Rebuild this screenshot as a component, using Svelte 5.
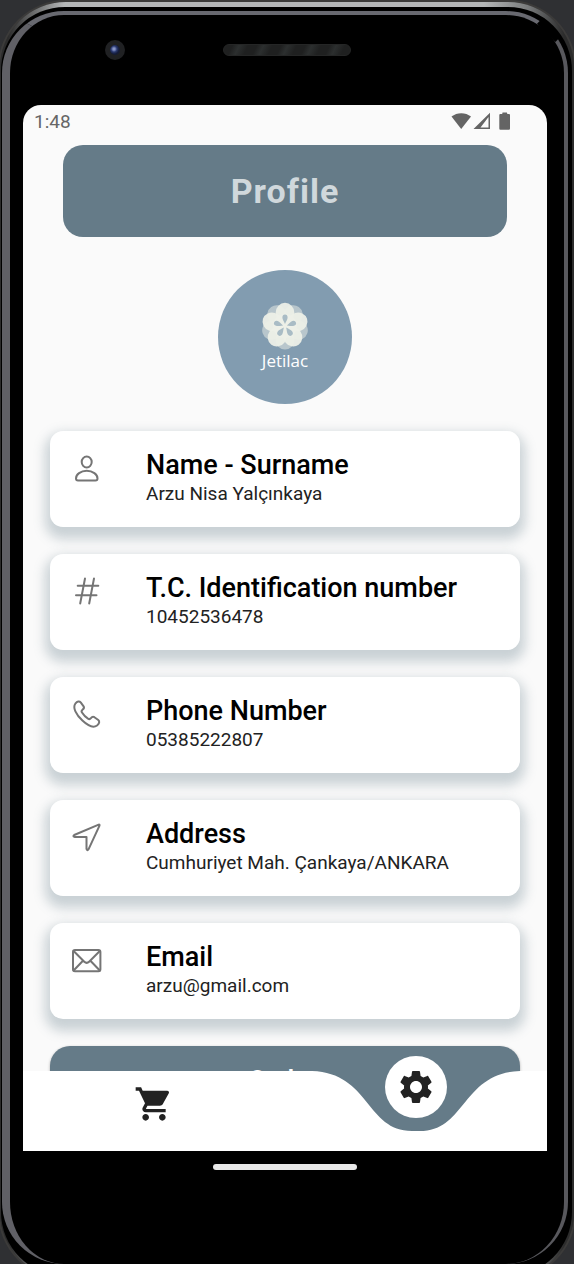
<script>
  const fields = [
    { icon: 'person', label: 'Name - Surname', value: 'Arzu Nisa Yalçınkaya' },
    { icon: 'number', label: 'T.C. Identification number', value: '10452536478' },
    { icon: 'phone', label: 'Phone Number', value: '05385222807' },
    { icon: 'location', label: 'Address', value: 'Cumhuriyet Mah. Çankaya/ANKARA' },
    { icon: 'mail', label: 'Email', value: 'arzu@gmail.com' }
  ];
  const petals = [0, 72, 144, 216, 288];
</script>

<div class="stage">
  <div class="phone">
    <div class="rim" aria-hidden="true"></div>
    <div class="bevel" aria-hidden="true"></div>
    <div class="glint" aria-hidden="true"></div>

    <div class="top-bezel" aria-hidden="true">
      <span class="camera"></span>
      <span class="speaker"></span>
    </div>

    <div class="screen">
      <div class="status">
        <span>1:48</span>
        <svg width="60" height="18" viewBox="0 0 60 18" aria-hidden="true">
          <path d="M.5 4.500C6 0 14.500 0 20 4.500L10.200 17z" fill="#646464" />
          <path d="M22.500 17L39 .8V17z M29.500 15.400H37.500V5z" fill="#646464" fill-rule="evenodd" />
          <path d="M51.300 2V1Q51.300.6 51.700.6H55.800Q56.200.6 56.200 1V2H58Q59 2 59 3V16.500Q59 17.700 57.900 17.700H49.400Q48.300 17.700 48.300 16.500V3Q48.300 2 49.300 2z" fill="#646464" />
        </svg>
      </div>

      <main>
        <h1>Profile</h1>

        <div class="logo">
          <svg width="50" height="50" viewBox="-25 -25 50 50" aria-hidden="true">
            {#each petals as a}
              <circle cx="0" cy="14" r="9.500" fill="#edf0e8" opacity=".5" transform="rotate({a})" />
            {/each}
            {#each petals as a}
              <ellipse cx="0" cy="-13.500" rx="9.300" ry="9.700" fill="#edf0e8" opacity=".94" transform="rotate({a})" />
            {/each}
            <circle r="12" fill="#edf0e8" />
            {#each petals as a}
              <path d="M0-2C-1.200-5-2.600-6.500-2.600-8.500A2.600 3 0 0 1 2.600-8.500C2.600-6.500 1.200-5 0-2z" fill="#a9bcc5" transform="rotate({a})" />
            {/each}
          </svg>
          <span>Jetilac</span>
        </div>

        <div class="cards">
          {#each fields as f}
            <section class="card">
              <svg class="icon" width="32" height="32" viewBox="0 0 32 32" aria-hidden="true">
                {#if f.icon === 'person'}
                  <ellipse cx="15.700" cy="9" rx="5" ry="5.400" />
                  <path d="M15.700 17.800C9.600 17.800 5 21.600 5 25.400Q5 27.400 7 27.400H24.500Q26.500 27.400 26.500 25.400C26.500 21.600 21.800 17.800 15.700 17.800z" />
                {:else if f.icon === 'number'}
                  <path d="M14 2.500L9.200 27.500M23 2.500L18.200 27.500M6.700 9.700H27.300M5 19.300H25.500" />
                {:else if f.icon === 'phone'}
                  <path d="M4.300 4.700C6.300 2.300 8.300 1.900 9.700 3.400L12.600 7.300C13.500 8.700 13 9.600 11.500 10.700C10.100 11.700 10.200 12.300 11 13.600C12.500 16 14.700 18.200 17 19.700C18.300 20.500 18.900 20.500 19.900 19.200C21 17.700 22 17.300 23.400 18.200L27.300 21C28.800 22.300 28.500 24.400 26 26.500C23 28.600 17.500 27.300 11.400 21.600C5 15.700 1.500 8.700 4.300 4.700z" />
                {:else if f.icon === 'location'}
                  <path d="M27.700 2.600L3.200 13Q1.500 14.100 3.500 14.900H15.500V27Q16.300 29.200 17.500 27.300L28.500 3.600Q28.700 2.300 27.700 2.600z" />
                {:else}
                  <rect x="2" y="5" width="27.400" height="21.200" rx="2" />
                  <path d="M2.600 6L13.300 16.700Q15.700 19 18.100 16.700L28.800 6M2.600 25.500L11.500 16.300M28.800 25.500L19.900 16.300" />
                {/if}
              </svg>
              <div class="text">
                <h2>{f.label}</h2>
                <p>{f.value}</p>
              </div>
            </section>
          {/each}
        </div>

        <button class="orders">Order</button>
      </main>

      <nav>
        <button class="tab" aria-label="Cart">
          <svg width="40" height="40" viewBox="0 0 24 24" aria-hidden="true">
            <path fill="#222" d="M7 18c-1.100 0-1.990.9-1.990 2S5.900 22 7 22s2-.9 2-2-.9-2-2-2zM1 2v2h2l3.600 7.590-1.350 2.450c-.16.28-.25.61-.25.960 0 1.100.9 2 2 2h12v-2H7.420c-.14 0-.25-.11-.25-.25l.03-.12.9-1.630h7.450c.75 0 1.410-.41 1.750-1.030l3.580-6.490c.08-.14.12-.31.12-.480 0-.55-.45-1-1-1H5.210l-.94-2H1zm16 16c-1.100 0-1.990.9-1.990 2s.89 2 1.990 2 2-.9 2-2-.9-2-2-2z" />
          </svg>
        </button>
        <div class="active">
          <span class="fill"></span>
          <svg class="notch" width="208" height="80" viewBox="0 0 208 80" aria-hidden="true">
            <path fill="#fff" d="M0 0C58 2 54 60 100 60H108C154 60 150 2 208 0V80H0z" />
          </svg>
          <span class="fill"></span>
          <button class="bubble" aria-label="Settings">
            <svg width="40" height="40" viewBox="0 0 24 24" aria-hidden="true">
              <path fill="#222" d="M19.140 12.940c.04-.3.06-.61.06-.940 0-.32-.02-.64-.07-.940l2.030-1.580c.18-.14.23-.41.12-.610l-1.920-3.320c-.12-.22-.37-.29-.59-.220l-2.390.960c-.5-.38-1.030-.7-1.620-.940l-.36-2.540c-.04-.24-.24-.41-.480-.410h-3.840c-.24 0-.43.17-.47.410l-.36 2.540c-.59.24-1.130.57-1.620.940l-2.390-.960c-.22-.08-.47 0-.59.220L2.740 8.870c-.12.21-.08.47.12.610l2.030 1.580c-.05.3-.09.63-.09.940s.02.64.07.940l-2.030 1.580c-.18.14-.23.41-.12.610l1.920 3.320c.12.22.37.29.59.220l2.390-.960c.5.38 1.030.7 1.620.940l.36 2.540c.05.24.24.41.480.410h3.840c.24 0 .44-.17.47-.410l.36-2.540c.59-.24 1.130-.56 1.620-.940l2.390.960c.22.08.47 0 .59-.220l1.920-3.320c.12-.22.07-.47-.12-.610l-2.010-1.580zM12 15.600c-1.980 0-3.600-1.620-3.600-3.600s1.620-3.600 3.600-3.600 3.600 1.620 3.600 3.600-1.620 3.600-3.600 3.600z" />
            </svg>
          </button>
        </div>
      </nav>
    </div>

    <div class="bottom-bezel"><span class="home"></span></div>
  </div>
</div>

<style>
  :global(body) {
    background: #2f3033;
  }

  .stage {
    overflow: hidden;
    font-family: Roboto, "Noto Sans", sans-serif;
    color: #222;
  }

  .phone {
    position: relative;
    box-sizing: border-box;
    min-height: 100vh;
    padding: 0 27px 0 23px;
  }

  .rim,
  .rim::after,
  .bevel,
  .glint {
    position: absolute;
    box-sizing: border-box;
  }

  .rim {
    inset: 2px 0 -14px 0;
    border-radius: 66px;
    background: linear-gradient(90deg, #2c2c2c 8px, #b4b6b7 64px calc(100% - 90px), #77797a calc(100% - 45px), #2c2c2c calc(100% - 10px));
    box-shadow: 0 0 0 2px #3c3b3a;
  }

  .rim::after {
    content: "";
    inset: 5px 2px 2px 1px;
    border-radius: 64px;
    background: #000;
  }

  .bevel {
    inset: 11px 6px 0 2px;
    border-style: solid;
    border-width: 4px 4px 0 8px;
    border-color: #686970 #58585d transparent #606066;
    border-radius: 62px;
  }

  .glint {
    top: 17px;
    right: 21px;
    width: 8px;
    height: 26px;
    background: #000;
    transform: rotate(-45deg);
  }

  .top-bezel {
    position: relative;
    display: grid;
    grid-template-columns: 1fr 128px 1fr;
    align-items: center;
    height: 105px;
    box-sizing: border-box;
    padding: 0 0 5px 3px;
  }

  .camera {
    width: 10px;
    height: 10px;
    margin-left: 79px;
    border: 5px solid #202123;
    border-radius: 50%;
    background: radial-gradient(circle at 40% 40%, #8795c8 0 1px, #29386f 3px, #151c38 5px);
  }

  .speaker {
    grid-column: 2;
    height: 12px;
    border: 1px solid #252626;
    border-radius: 7px;
    box-sizing: border-box;
    background: repeating-linear-gradient(115deg, #1f2020 0 8px, #2c2f2f 14px, #1f2020 22px);
  }

  .screen {
    position: relative;
    overflow: hidden;
    background: #fafafa;
    border-radius: 18px 18px 0 0;
  }

  .status {
    display: flex;
    justify-content: space-between;
    align-items: center;
    height: 32px;
    padding: 0 36px 0 11px;
    font-size: 19px;
    color: #666;
  }

  main {
    display: flex;
    flex-direction: column;
    align-items: center;
    padding: 8px 27px 0;
  }

  h1 {
    align-self: stretch;
    margin: 0 13px;
    border-radius: 20px;
    background: #657b88;
    color: #d0d8dc;
    font-size: 34px;
    font-weight: 700;
    letter-spacing: 1px;
    line-height: 92px;
    text-align: center;
  }

  .logo {
    display: flex;
    flex-direction: column;
    align-items: center;
    box-sizing: border-box;
    width: 134px;
    height: 134px;
    margin: 33px 0 27px;
    padding-top: 31px;
    border-radius: 50%;
    background: #829cb0;
    color: #fff;
    font: 500 17px/20px "Open Sans", sans-serif;
  }

  .cards {
    display: flex;
    flex-direction: column;
    align-self: stretch;
    gap: 27px;
  }

  .card {
    display: flex;
    gap: 43px;
    box-sizing: border-box;
    min-height: 96px;
    padding: 18px 21px;
    border-radius: 13px;
    background: #fff;
    box-shadow: 0 7px 12px 5px rgba(101, 123, 136, 0.32);
  }

  .icon {
    flex: none;
    margin-top: 4px;
    fill: none;
    stroke: #757575;
    stroke-width: 2;
    stroke-linecap: round;
    stroke-linejoin: round;
  }

  h2 {
    margin: 0;
    color: #000;
    font-size: 27px;
    font-weight: 500;
    line-height: 32px;
  }

  p {
    margin: 0;
    font-size: 19px;
    line-height: 26px;
  }

  button {
    border: 0;
    padding: 0;
    font-family: inherit;
    cursor: pointer;
  }

  .orders {
    display: flex;
    align-items: flex-start;
    justify-content: center;
    align-self: stretch;
    height: 92px;
    margin-top: 27px;
    padding-top: 19px;
    border-radius: 20px;
    background: #657b88;
    box-shadow: 0 1px 3px rgba(0, 0, 0, 0.3);
    color: #fff;
    font-size: 28px;
    font-weight: 500;
    letter-spacing: 1px;
    line-height: 32px;
  }

  nav {
    position: relative;
    display: grid;
    grid-template-columns: 1fr 1fr;
    height: 80px;
    margin-top: -67px;
  }

  .tab {
    display: flex;
    justify-content: center;
    padding-top: 13px;
    background: #fff;
  }

  .active {
    position: relative;
    display: flex;
  }

  .fill {
    flex: 1;
    background: #fff;
  }

  .notch {
    display: block;
  }

  .bubble {
    position: absolute;
    top: -15px;
    left: 50%;
    display: grid;
    place-items: center;
    width: 62px;
    height: 62px;
    margin-left: -31px;
    border-radius: 50%;
    background: #fff;
  }

  .bottom-bezel {
    position: relative;
    display: flex;
    justify-content: center;
    height: 100px;
    padding-top: 13px;
  }

  .home {
    width: 144px;
    height: 6px;
    border-radius: 3px;
    background: #e8e8e8;
  }
</style>
